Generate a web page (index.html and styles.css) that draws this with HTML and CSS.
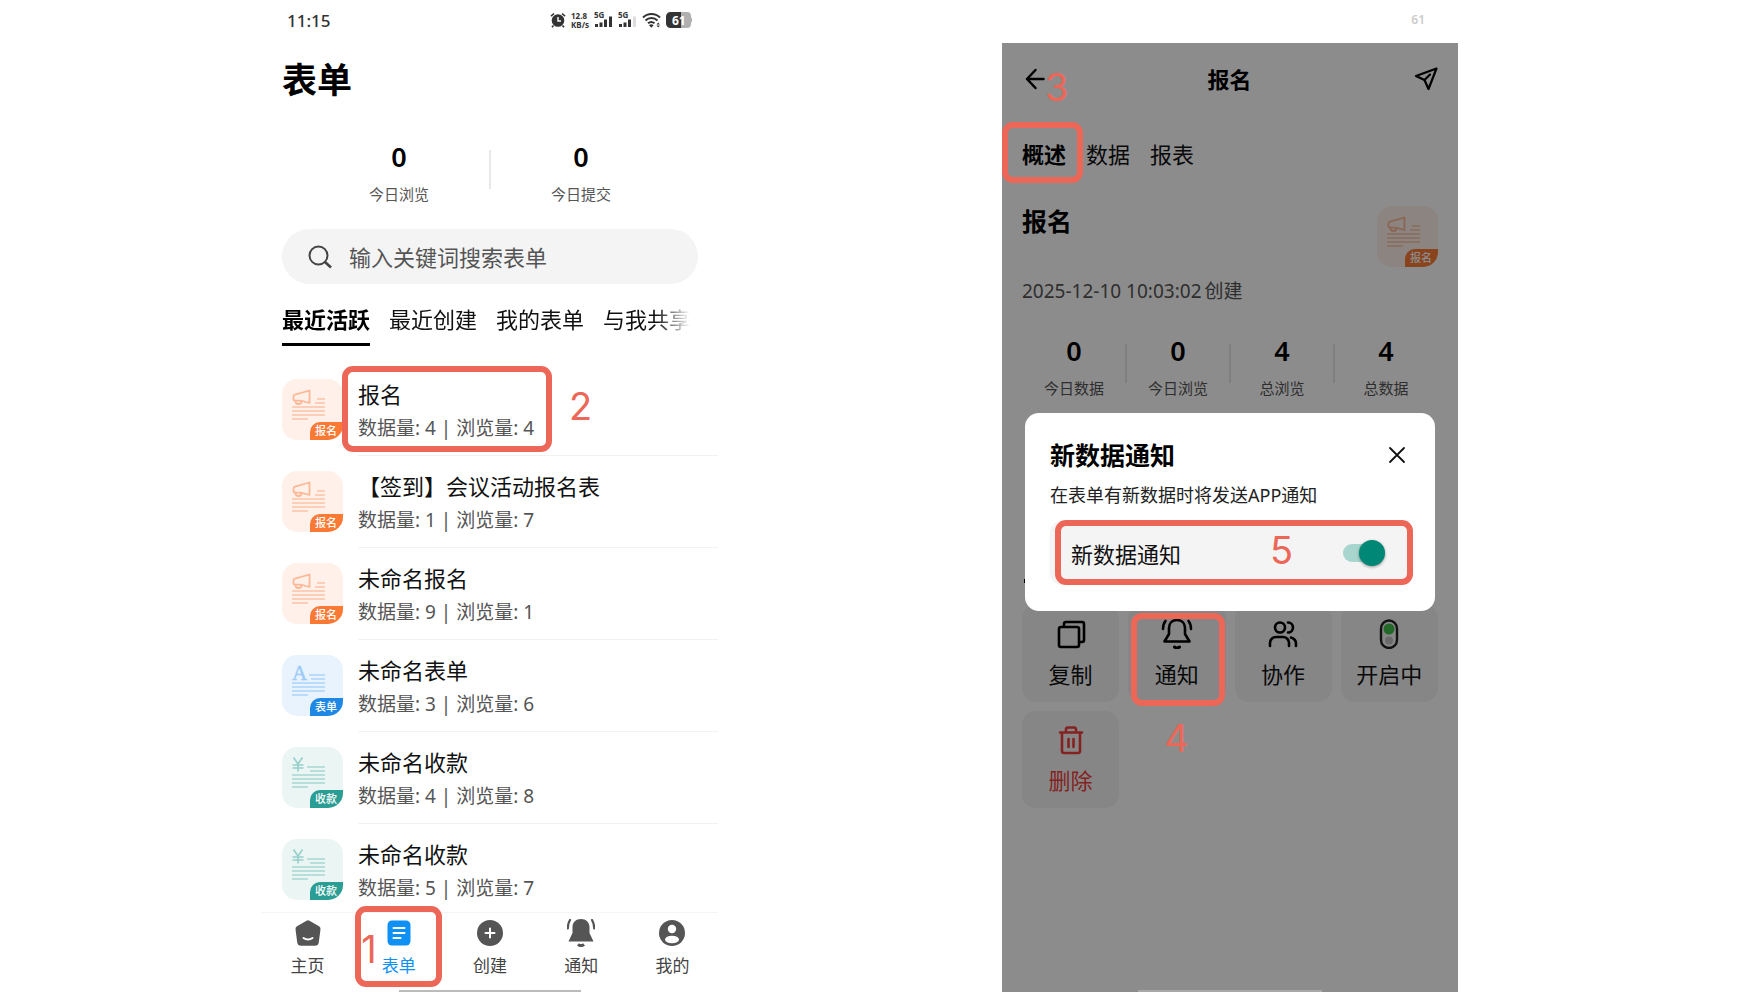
FILE: index.html
```html
<!DOCTYPE html>
<html lang="zh-CN">
<head>
    <meta charset="UTF-8">
    <meta name="viewport" content="width=device-width, initial-scale=1.0">
    <title>表单 - 新数据通知</title>
    <link rel="stylesheet" href="styles.css">
</head>
<body>

<svg class="sprite" aria-hidden="true">
    <symbol id="art-signup" viewBox="0 0 61 61">
        <path d="M27.500 11.500v12.500l-9-2.300h-5a2 2 0 0 1-2-2v-2a2 2 0 0 1 1.500-2z" fill="none" stroke="currentColor" stroke-width="1.800" stroke-linejoin="round"/>
        <path d="M13.500 22a3 3 0 0 0 6 0" fill="none" stroke="currentColor" stroke-width="1.800"/>
        <path d="M35 20h8M33 24h10M10 28h33M10 32h33M10 36h33M10 40h16" stroke="currentColor" stroke-width="1.400" opacity=".8"/>
    </symbol>
    <symbol id="art-form" viewBox="0 0 61 61">
        <text x="10" y="25" font-family="Liberation Serif, serif" font-size="21" fill="currentColor" stroke="currentColor" stroke-width=".5">A</text>
        <path d="M27 20h16M29 24h14M10 28h33M10 32h33M10 36h33M10 40h16" stroke="currentColor" stroke-width="1.400" opacity=".8"/>
    </symbol>
    <symbol id="art-pay" viewBox="0 0 61 61">
        <path d="M11.500 10.500l4.500 6.500 4.500-6.500M16 17v7.500M10.500 18h11M10.500 21h11" fill="none" stroke="currentColor" stroke-width="1.700"/>
        <path d="M25 20h18M28 24h15M10 28h33M10 32h33M10 36h33M10 40h16" stroke="currentColor" stroke-width="1.400" opacity=".8"/>
    </symbol>
</svg>

<main class="stage">

    <!-- Lista de formularios -->
    <section class="phone phone-list">
        <div class="status">
            <span class="time">11:15</span>
            <div class="status-icons">
                <svg width="16" height="16" viewBox="0 0 16 16">
                    <circle cx="8" cy="8.500" r="6.300" fill="#333"/>
                    <path d="M1 4.200L4 1.500M15 4.200L12 1.500M3.500 13.500L2 15.300M12.500 13.500l1.500 1.800" stroke="#333" stroke-width="1.600"/>
                    <path d="M8 5v4h3" fill="none" stroke="#fff" stroke-width="1.400"/>
                </svg>
                <span class="speed">12.8<br>KB/s</span>
                <svg class="signal" width="19" height="24" viewBox="0 0 19 24">
                    <text x="0" y="10">5G</text>
                    <path d="M2.500 16v3M7 14.500V19M11.500 11.500V19M16.500 8.500V19" stroke="#333" stroke-width="3"/>
                </svg>
                <svg class="signal" width="19" height="24" viewBox="0 0 19 24">
                    <text x="0" y="10">5G</text>
                    <path d="M2.500 16v3M7 14.500V19M11.500 11.500V19" stroke="#333" stroke-width="3"/>
                    <path d="M16.500 8.500V19" stroke="#ddd" stroke-width="3"/>
                </svg>
                <svg class="wifi" width="19" height="16" viewBox="0 0 19 16">
                    <path d="M1 5.500a12 12 0 0 1 17 0M3.500 8.500a8.500 8.500 0 0 1 12 0M6 11.300a5 5 0 0 1 6.500 0" fill="none" stroke="#333" stroke-width="1.900"/>
                    <path d="M9.300 15.800l-2.300-2.600a3.500 3.500 0 0 1 4.600 0z" fill="#333"/>
                    <path d="M14.500 12.500l1.700-2 1.700 2zM14.500 13.500l1.700 2 1.700-2z" fill="#333"/>
                </svg>
                <svg width="27" height="16" viewBox="0 0 27 16">
                    <path d="M4.500 0H15v16H4.500A4.500 4.500 0 0 1 0 11.500v-7A4.500 4.500 0 0 1 4.500 0z" fill="#333"/>
                    <path d="M15 0h6a4 4 0 0 1 4 4v1.500c1.500 0 1.500 5 0 5V12a4 4 0 0 1-4 4h-6z" fill="#b0b0b0"/>
                    <text x="6" y="12.500" class="battery-text">61</text>
                </svg>
            </div>
        </div>

        <h1>表单</h1>

        <div class="stats stats-two">
            <div class="stat"><strong>0</strong><span>今日浏览</span></div>
            <div class="stat"><strong>0</strong><span>今日提交</span></div>
        </div>

        <label class="search">
            <svg width="24" height="24" viewBox="0 0 24 24" fill="none" stroke="#444" stroke-width="2">
                <circle cx="10.500" cy="10.500" r="9"/>
                <path d="M17 17l6 5.500" stroke-width="2.600"/>
            </svg>
            <input type="search" placeholder="输入关键词搜索表单" aria-label="输入关键词搜索表单">
        </label>

        <nav class="tabs list-tabs">
            <a href="#" class="active">最近活跃</a>
            <a href="#">最近创建</a>
            <a href="#">我的表单</a>
            <a href="#">与我共享</a>
        </nav>

        <ul class="forms">
            <li>
                <div class="form-icon signup"><svg><use href="#art-signup"/></svg><span>报名</span></div>
                <div class="form-text">
                    <h3>报名</h3>
                    <p>数据量: 4 | 浏览量: 4</p>
                    <span class="mark mark-2"></span>
                    <b class="step step-2">2</b>
                </div>
            </li>
            <li>
                <div class="form-icon signup"><svg><use href="#art-signup"/></svg><span>报名</span></div>
                <div class="form-text">
                    <h3>【签到】会议活动报名表</h3>
                    <p>数据量: 1 | 浏览量: 7</p>
                </div>
            </li>
            <li>
                <div class="form-icon signup"><svg><use href="#art-signup"/></svg><span>报名</span></div>
                <div class="form-text">
                    <h3>未命名报名</h3>
                    <p>数据量: 9 | 浏览量: 1</p>
                </div>
            </li>
            <li>
                <div class="form-icon form"><svg><use href="#art-form"/></svg><span>表单</span></div>
                <div class="form-text">
                    <h3>未命名表单</h3>
                    <p>数据量: 3 | 浏览量: 6</p>
                </div>
            </li>
            <li>
                <div class="form-icon pay"><svg><use href="#art-pay"/></svg><span>收款</span></div>
                <div class="form-text">
                    <h3>未命名收款</h3>
                    <p>数据量: 4 | 浏览量: 8</p>
                </div>
            </li>
            <li>
                <div class="form-icon pay"><svg><use href="#art-pay"/></svg><span>收款</span></div>
                <div class="form-text">
                    <h3>未命名收款</h3>
                    <p>数据量: 5 | 浏览量: 7</p>
                </div>
            </li>
        </ul>

        <nav class="bottom-nav">
            <a href="#">
                <svg width="28" height="28" viewBox="0 0 28 28">
                    <path d="M12.500 1.800a3 3 0 0 1 3 0l9.500 5.500a3 3 0 0 1 1.500 3l-1.700 13a4 4 0 0 1-4 3.500H7.200a4 4 0 0 1-4-3.500l-1.700-13a3 3 0 0 1 1.500-3z" fill="#555"/>
                    <path d="M9.500 19q4.500 3 9 0" fill="none" stroke="#fff" stroke-width="2" stroke-linecap="round"/>
                </svg>
                主页
            </a>
            <a href="#" class="active">
                <svg width="28" height="28" viewBox="0 0 28 28">
                    <rect x="2.500" y="1.500" width="23" height="25" rx="4.500" fill="#0f90f5"/>
                    <path d="M8.500 9h11M8.500 14h11M8.500 19h7" stroke="#fff" stroke-width="2" stroke-linecap="round"/>
                </svg>
                表单
                <span class="mark mark-1"></span>
                <b class="step step-1">1</b>
            </a>
            <a href="#">
                <svg width="28" height="28" viewBox="0 0 28 28">
                    <circle cx="14" cy="14" r="13" fill="#555"/>
                    <path d="M14 9.500v9M9.500 14h9" stroke="#fff" stroke-width="2" stroke-linecap="round"/>
                </svg>
                创建
            </a>
            <a href="#">
                <svg width="28" height="28" viewBox="0 0 28 28">
                    <path d="M14 0c-5 0-8.500 3.500-8.500 8v6L1.500 22.500h25l-4-8.500V8C22.500 3.500 19 0 14 0z" fill="#555"/>
                    <path d="M11 25.300q3 2.600 6 0" fill="none" stroke="#555" stroke-width="3"/>
                    <path d="M3 1Q0.800 4.500 0.800 9.500M25 1q2.200 3.500 2.200 8.500" fill="none" stroke="#555" stroke-width="2.200" stroke-linecap="round"/>
                </svg>
                通知
            </a>
            <a href="#">
                <svg width="28" height="28" viewBox="0 0 28 28">
                    <circle cx="14" cy="14" r="13" fill="#555"/>
                    <circle cx="14" cy="10" r="4.200" fill="#fff"/>
                    <ellipse cx="14" cy="20.500" rx="7" ry="3.800" fill="#fff"/>
                </svg>
                我的
            </a>
        </nav>
        <div class="home-bar"></div>
    </section>

    <!-- Detalle con el diálogo abierto -->
    <section class="phone phone-detail">
        <div class="status status-light"><span>61</span></div>

        <div class="detail">
            <header class="detail-header">
                <button type="button" class="icon-button" aria-label="返回">
                    <svg width="20" height="22" viewBox="0 0 20 22" fill="none" stroke="#000" stroke-width="2.500" stroke-linecap="round" stroke-linejoin="round">
                        <path d="M18.500 11H2M10.500 2L2 11l8.500 9"/>
                    </svg>
                    <b class="step step-3">3</b>
                </button>
                <h2>报名</h2>
                <button type="button" class="icon-button" aria-label="分享">
                    <svg width="24" height="24" viewBox="0 0 24 24" fill="none" stroke="#000" stroke-width="2.200" stroke-linecap="round" stroke-linejoin="round">
                        <path d="M22.500 1.500L2 9l8.500 4 4 9z"/>
                        <path d="M10.500 13l5.500-5.500"/>
                    </svg>
                </button>
            </header>

            <nav class="tabs">
                <a href="#" class="active">概述<span class="mark mark-3"></span></a>
                <a href="#">数据</a>
                <a href="#">报表</a>
            </nav>

            <div class="summary">
                <div>
                    <h2>报名</h2>
                    <p><span>2025-12-10 10:03:02</span><span>创建</span></p>
                </div>
                <div class="form-icon signup"><svg><use href="#art-signup"/></svg><span>报名</span></div>
            </div>

            <div class="stats">
                <div class="stat"><strong>0</strong><span>今日数据</span></div>
                <div class="stat"><strong>0</strong><span>今日浏览</span></div>
                <div class="stat"><strong>4</strong><span>总浏览</span></div>
                <div class="stat"><strong>4</strong><span>总数据</span></div>
            </div>

            <div class="section-line"></div>

            <div class="tiles">
                <button type="button">
                    <svg width="30" height="30" viewBox="0 0 30 30" fill="none" stroke="#000" stroke-width="2.600" stroke-linejoin="round">
                        <rect x="3" y="8" width="20" height="20" rx="2"/>
                        <path d="M8 8V5a2 2 0 0 1 2-2h16a2 2 0 0 1 2 2v16a2 2 0 0 1-2 2h-3"/>
                    </svg>
                    复制
                </button>
                <button type="button">
                    <svg width="32" height="30" viewBox="0 0 32 30" fill="none" stroke="#000" stroke-width="2.600" stroke-linecap="round" stroke-linejoin="round">
                        <path d="M16 1c-5 0-8 3.500-8 8v6L3.500 22.500h25L24 15V9c0-4.500-3-8-8-8z"/>
                        <path d="M13.500 28q2.500 2 5 0" stroke-width="3"/>
                        <path d="M4.500 2Q2 5 2 10M27.500 2Q30 5 30 10"/>
                    </svg>
                    通知
                    <span class="mark mark-4"></span>
                    <b class="step step-4">4</b>
                </button>
                <button type="button">
                    <svg width="30" height="30" viewBox="0 0 30 30" fill="none" stroke="#000" stroke-width="2.600" stroke-linecap="round">
                        <circle cx="12" cy="8.500" r="5"/>
                        <path d="M20 3.500a5 5 0 0 1 0 10M2 27v-3a6 6 0 0 1 6-6h7a6 6 0 0 1 6 6v3M23 18.500c3 1 5 3 5 6V27"/>
                    </svg>
                    协作
                </button>
                <button type="button">
                    <svg width="20" height="30" viewBox="0 0 20 30">
                        <rect x="2" y="1.500" width="16" height="27.500" rx="8" fill="none" stroke="#222" stroke-width="2.400"/>
                        <circle cx="10" cy="10" r="5.500" fill="#3fbd4c"/>
                        <circle cx="10" cy="21.500" r="4" fill="#c4c4c4"/>
                    </svg>
                    开启中
                </button>
                <button type="button" class="danger">
                    <svg width="28" height="30" viewBox="0 0 28 30" fill="none" stroke="#f03f3f" stroke-width="2.600" stroke-linecap="round" stroke-linejoin="round">
                        <path d="M3 7.500h22M9 7V4.500a2 2 0 0 1 2-2h6a2 2 0 0 1 2 2V7M5 8v18a2 2 0 0 0 2 2h14a2 2 0 0 0 2-2V8M11.500 14v8M16.500 14v8"/>
                    </svg>
                    删除
                </button>
            </div>

            <div class="overlay">
                <div class="dialog" role="dialog" aria-labelledby="dialogTitle">
                    <div class="dialog-head">
                        <h2 id="dialogTitle">新数据通知</h2>
                        <button type="button" class="icon-button" aria-label="关闭">
                            <svg width="18" height="18" viewBox="0 0 18 18" stroke="#111" stroke-width="1.800" stroke-linecap="round">
                                <path d="M2 2l14 14M16 2L2 16"/>
                            </svg>
                        </button>
                    </div>
                    <p>在表单有新数据时将发送APP通知</p>
                    <div class="switch-row">
                        <label for="notify">新数据通知</label>
                        <input type="checkbox" id="notify" class="switch" checked>
                        <span class="mark mark-5"></span>
                        <b class="step step-5">5</b>
                    </div>
                </div>
            </div>
            <div class="home-bar"></div>
        </div>
    </section>

</main>

</body>
</html>
```

FILE: styles.css
```css
* {
    box-sizing: border-box;
}

body {
    margin: 0;
    background-color: #fff;
    color: #111;
    font-family: "Noto Sans", "Noto Sans CJK SC", sans-serif;
    font-size: 22px;
}

h1, h2, h3, p, ul {
    margin: 0;
    padding: 0;
}

a {
    color: inherit;
    text-decoration: none;
}

button {
    font-family: inherit;
    color: inherit;
    border: none;
    background: none;
    padding: 0;
    cursor: pointer;
}

svg {
    display: block;
}

.sprite {
    display: none;
}

.stage {
    display: grid;
    grid-template-columns: 131fr 228fr 142fr 228fr 151fr;
    min-height: 100vh;
}

.phone {
    display: flex;
    flex-direction: column;
    min-width: 0;
}

.phone-list {
    grid-column: 2;
}

.phone-detail {
    grid-column: 4;
}

/* barra de estado */
.status {
    display: flex;
    justify-content: space-between;
    align-items: center;
    height: 40px;
    padding: 0 25px;
    color: #333;
}

.time {
    font-size: 17px;
    font-weight: 500;
}

.status-icons {
    display: flex;
    align-items: center;
    gap: 5px;
}

.speed {
    font-size: 8px;
    line-height: 9px;
    font-weight: 700;
}

.signal text {
    font-size: 8px;
    font-weight: 700;
    fill: #333;
}

.battery-text {
    font-size: 12px;
    font-weight: 700;
    fill: #fff;
}

.status-light {
    justify-content: flex-end;
    height: 43px;
    padding: 0 33px 4px;
    color: #ccc;
    font-size: 12px;
    font-weight: 600;
}

h1 {
    padding: 0 20px;
    margin-top: 20px;
    font-size: 35px;
    line-height: 40px;
    color: #000;
}

/* contadores */
.stats {
    display: flex;
}

.stats-two {
    padding: 0 46px;
    margin-top: 41px;
}

.stat {
    position: relative;
    flex: 1;
    display: flex;
    flex-direction: column;
    align-items: center;
    gap: 11px;
}

.stat strong {
    font-size: 27px;
    line-height: 32px;
    font-weight: 600;
    color: #000;
}

.stat span {
    font-size: 15px;
    line-height: 20px;
    color: #555;
}

.stat + .stat::before {
    content: "";
    position: absolute;
    left: -1px;
    top: 9px;
    width: 2px;
    height: 39px;
    background-color: #e8e8e8;
}

.search {
    display: flex;
    align-items: center;
    gap: 17px;
    height: 55px;
    margin: 25px 20px 0;
    padding: 0 26px;
    border-radius: 28px;
    background-color: #f4f4f4;
}

.search input {
    flex: 1;
    min-width: 0;
    padding: 0;
    border: none;
    outline: none;
    background: none;
    font-family: inherit;
    font-size: 22px;
}

.search input::placeholder {
    color: #555;
}

.tabs {
    display: flex;
    gap: 20px;
    line-height: 32px;
    white-space: nowrap;
}

.tabs a {
    position: relative;
}

.tabs .active {
    font-weight: 700;
    color: #000;
}

.list-tabs {
    gap: 19px;
    margin: 19px 20px 0;
    overflow: hidden;
    -webkit-mask-image: linear-gradient(to left, transparent 8px, #000 42px);
    mask-image: linear-gradient(to left, transparent 8px, #000 42px);
}

.list-tabs a {
    padding-bottom: 8px;
    border-bottom: 3px solid transparent;
}

.list-tabs .active {
    border-color: #000;
}

/* lista de formularios */
.forms {
    list-style: none;
    margin-top: 18px;
    padding-left: 20px;
}

.forms li {
    display: flex;
    gap: 15px;
}

.form-icon {
    position: relative;
    flex: none;
    width: 61px;
    height: 61px;
    border-radius: 15px;
    overflow: hidden;
}

.forms .form-icon {
    margin-top: 15px;
}

.form-icon svg {
    width: 61px;
    height: 61px;
}

.form-icon span {
    position: absolute;
    right: 0;
    bottom: 0;
    width: 33px;
    height: 18px;
    padding-left: 5px;
    border-top-left-radius: 10px;
    color: #fff;
    font-size: 11px;
    line-height: 18px;
    font-weight: 500;
}

.signup {
    background-color: #fff0e9;
    color: #fdb997;
}

.signup span {
    background-color: #fa7a35;
}

.form {
    background-color: #e8f3fe;
    color: #9ccbf7;
}

.form span {
    background-color: #1f88e5;
}

.pay {
    background-color: #eaf5f4;
    color: #98d0cb;
}

.pay span {
    background-color: #2a9d94;
}

.form-text {
    position: relative;
    flex: 1;
    padding: 15px 0 15px;
    border-bottom: 1px solid #f2f2f2;
}

.forms li:last-child .form-text {
    padding-bottom: 12px;
    border-bottom: none;
}

.form-text h3 {
    font-size: 22px;
    line-height: 30px;
    font-weight: 400;
}

.form-text p {
    margin-top: 7px;
    font-size: 19px;
    line-height: 24px;
    color: #555;
}

/* navegación inferior */
.bottom-nav {
    display: grid;
    grid-template-columns: repeat(5, 1fr);
    margin-top: auto;
    padding: 6px 0 14px;
    border-top: 1px solid #f5f5f5;
    font-size: 17px;
    line-height: 20px;
    color: #444;
}

.bottom-nav a {
    position: relative;
    display: flex;
    flex-direction: column;
    align-items: center;
    gap: 9px;
}

.bottom-nav .active {
    color: #0f90f5;
}

.home-bar {
    align-self: center;
    width: 40%;
    height: 2px;
    background-color: #bbb;
}

/* detalle */
.detail {
    position: relative;
    flex: 1;
    display: flex;
    flex-direction: column;
    padding: 0 20px;
}

.detail .home-bar {
    position: relative;
    z-index: 2;
    width: 44%;
    margin-top: auto;
    background-color: #a8a8a8;
}

.detail-header {
    display: flex;
    justify-content: space-between;
    align-items: center;
    height: 72px;
    padding: 0 0 0 3px;
}

.detail-header h2 {
    font-size: 22px;
    line-height: 30px;
    color: #000;
}

.icon-button {
    position: relative;
}

.detail .tabs {
    margin-top: 23px;
}

.summary {
    display: flex;
    justify-content: space-between;
    align-items: flex-start;
    margin-top: 36px;
}

.summary h2 {
    font-size: 25px;
    line-height: 30px;
    color: #000;
}

.summary p {
    display: flex;
    gap: 3px;
    margin-top: 43px;
    font-size: 19px;
    line-height: 24px;
    color: #555;
}

.detail .stats {
    margin-top: 32px;
}

/* borde del título que asoma tras el diálogo */
.section-line {
    width: 4px;
    height: 4px;
    margin: 181px 0 0 2px;
    background-color: #000;
}

.tiles {
    display: grid;
    grid-template-columns: repeat(4, 1fr);
    gap: 9px;
    margin-top: 22px;
}

.tiles button {
    position: relative;
    display: flex;
    flex-direction: column;
    align-items: center;
    gap: 10px;
    padding: 14px 0 13px;
    border-radius: 14px;
    background-color: #f4f4f4;
    font-size: 22px;
    line-height: 30px;
}

.tiles .danger {
    color: #f03f3f;
}

.overlay {
    position: absolute;
    inset: 0;
    z-index: 1;
    padding: 370px 23px 0;
    background-color: rgba(0, 0, 0, 0.45);
}

.dialog {
    padding: 26px 22px 26px 25px;
    border-radius: 14px;
    background-color: #fff;
}

.dialog-head {
    display: flex;
    justify-content: space-between;
    align-items: center;
    padding-right: 7px;
}

.dialog h2 {
    font-size: 25px;
    line-height: 32px;
    color: #000;
}

.dialog p {
    margin-top: 12px;
    font-size: 18px;
    line-height: 24px;
    color: #222;
}

.switch-row {
    position: relative;
    display: flex;
    justify-content: space-between;
    align-items: center;
    height: 64px;
    margin-top: 14px;
    padding: 0 28px 0 21px;
    border-radius: 12px;
    background-color: #f4f4f4;
}

.switch {
    appearance: none;
    position: relative;
    width: 42px;
    height: 18px;
    margin: 0;
    border-radius: 9px;
    background-color: #a9d5cf;
}

.switch::before {
    content: "";
    position: absolute;
    top: -4px;
    left: 0;
    width: 26px;
    height: 26px;
    border-radius: 50%;
    background-color: #fff;
    box-shadow: 0 1px 3px rgba(0, 0, 0, 0.4);
}

.switch:checked::before {
    left: 16px;
    background-color: #008775;
}

/* marcas rojas de la guía */
.mark {
    position: absolute;
    z-index: 2;
    border: 6px solid #ec6757;
    border-radius: 11px;
    pointer-events: none;
}

.step {
    position: absolute;
    z-index: 2;
    color: #ec6757;
    font-family: Inter, "Liberation Sans", sans-serif;
    font-size: 38px;
    line-height: 40px;
    font-weight: 400;
}

.mark-1 {
    inset: -13px 2px -11px 2px;
}

.step-1 {
    top: 10px;
    left: 8px;
}

.mark-2 {
    top: 2px;
    bottom: 3px;
    left: -16px;
    width: 210px;
}

.step-2 {
    top: 22px;
    left: 211px;
}

.mark-3 {
    inset: -16px -17px -13px -20px;
}

.step-3 {
    top: -1px;
    left: 20px;
}

.mark-4 {
    inset: 8px 1px -4px 3px;
}

.step-4 {
    top: 113px;
    left: 36px;
}

.mark-5 {
    inset: -1px 0 0 5px;
}

.step-5 {
    top: 9px;
    left: 220px;
}
```
